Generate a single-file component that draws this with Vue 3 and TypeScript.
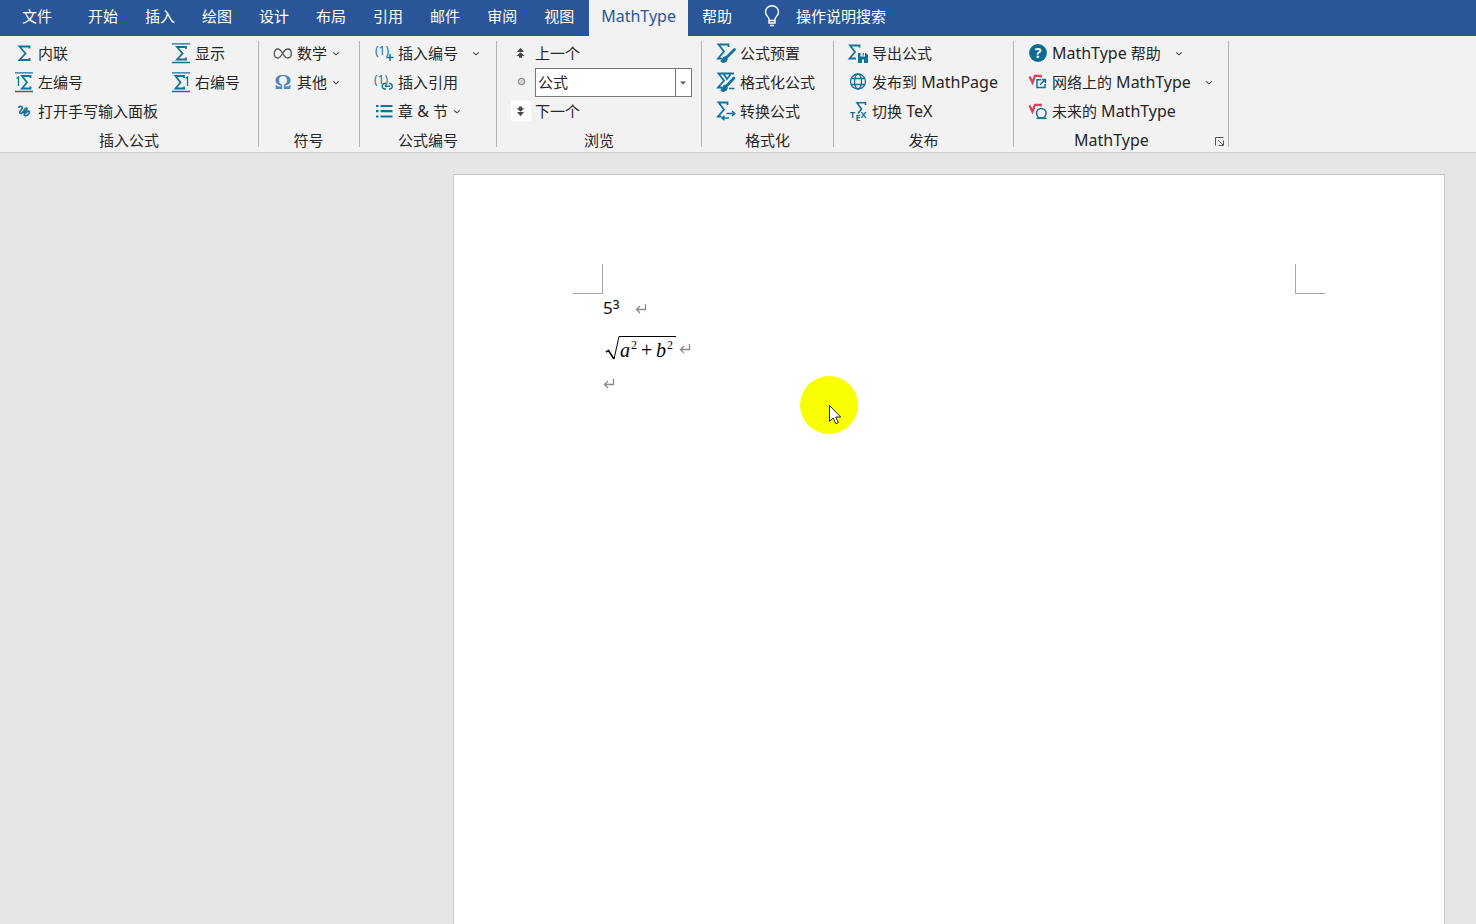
<script setup lang="ts">
import { ref } from 'vue'

interface Command {
  label: string
  icon: string
  menu?: 'near' | 'far'
}

interface Group {
  title: string
  kind: string
  commands: Command[]
  launcher?: boolean
}

const tabs = ['开始', '插入', '绘图', '设计', '布局', '引用', '邮件', '审阅', '视图', 'MathType', '帮助']
const activeTab = ref('MathType')
const browseTarget = ref('公式')

const groups: Group[] = [
  {
    title: '插入公式',
    kind: 'insert',
    commands: [
      { label: '内联', icon: 'inline' },
      { label: '显示', icon: 'display' },
      { label: '左编号', icon: 'left-number' },
      { label: '右编号', icon: 'right-number' },
      { label: '打开手写输入面板', icon: 'handwriting' },
    ],
  },
  {
    title: '符号',
    kind: 'symbols',
    commands: [
      { label: '数学', icon: 'infinity', menu: 'near' },
      { label: '其他', icon: 'omega', menu: 'near' },
    ],
  },
  {
    title: '公式编号',
    kind: 'numbering',
    commands: [
      { label: '插入编号', icon: 'number-add', menu: 'far' },
      { label: '插入引用', icon: 'number-link' },
      { label: '章 & 节', icon: 'list', menu: 'near' },
    ],
  },
  { title: '浏览', kind: 'browse', commands: [] },
  {
    title: '格式化',
    kind: 'format',
    commands: [
      { label: '公式预置', icon: 'preset' },
      { label: '格式化公式', icon: 'format' },
      { label: '转换公式', icon: 'convert' },
    ],
  },
  {
    title: '发布',
    kind: 'publish',
    commands: [
      { label: '导出公式', icon: 'export' },
      { label: '发布到 MathPage', icon: 'globe' },
      { label: '切换 TeX', icon: 'tex' },
    ],
  },
  {
    title: 'MathType',
    kind: 'about',
    launcher: true,
    commands: [
      { label: 'MathType 帮助', icon: 'help', menu: 'far' },
      { label: '网络上的 MathType', icon: 'web', menu: 'far' },
      { label: '未来的 MathType', icon: 'future' },
    ],
  },
]

// Splits a label into Latin and Chinese runs, which are set at different sizes.
function runs(text: string) {
  return (text.match(/[ -~]+|[^ -~]+/g) ?? []).map((part) => ({
    part,
    latin: /^[ -~]+$/.test(part),
  }))
}
</script>

<template>
  <div class="app">
    <nav class="tabs">
      <button type="button" class="tab file">文件</button>
      <button
        v-for="tab in tabs"
        :key="tab"
        type="button"
        class="tab"
        :class="{ active: tab === activeTab, latin: tab === 'MathType' }"
        @click="activeTab = tab"
      >{{ tab }}</button>
      <button type="button" class="tell-me">
        <svg class="bulb" viewBox="0 0 16 22" fill="none" stroke="#fff" stroke-width="1.4" aria-hidden="true">
          <path d="M5 15.500V14C5 12.300 1.500 10.800 1.500 7A6.500 6.200 0 0 1 14.500 7C14.500 10.800 11 12.300 11 14V15.500ZM5 15.500V18H11V15.500M6 20.500H10" />
        </svg>
        <span>操作说明搜索</span>
      </button>
    </nav>

    <div class="ribbon">
      <template v-for="group in groups" :key="group.title">
        <section class="group" :class="group.kind" :aria-label="group.title">
          <div v-if="group.kind !== 'browse'" class="commands">
            <button v-for="cmd in group.commands" :key="cmd.label" type="button" class="command">
              <svg class="icon" viewBox="0 0 21 21" fill="none" stroke="#12729c" stroke-width="1.8" aria-hidden="true">
                <path v-if="cmd.icon === 'inline'" d="M15.500 5.500V3.500H5.500L11.500 10.500L5.500 17H15.500V15" />
                <template v-else-if="cmd.icon === 'display'">
                  <path d="M1 .8H19M1 19.500H19" stroke-width="1.300" />
                  <path d="M15 6V4H6L11.500 10.500L6 16.500H15V14.500" />
                </template>
                <template v-else-if="cmd.icon === 'left-number'">
                  <path d="M1 .8H19M1 19.500H19" stroke-width="1.300" />
                  <path d="M16.500 6V4H8L13 10.500L8 16.500H16.500V14.500" />
                  <path d="M2.500 6.500L4.500 5V14" stroke-width="1.300" />
                </template>
                <template v-else-if="cmd.icon === 'right-number'">
                  <path d="M1 .8H19M1 19.500H19" stroke-width="1.300" />
                  <path d="M13 6V4H4.500L9.500 10.500L4.500 16.500H13V14.500" />
                  <path d="M14.500 6.500L16.500 5V14" stroke-width="1.300" />
                </template>
                <path v-else-if="cmd.icon === 'handwriting'" d="M4.500 7C5.500 4.800 8.800 4.800 8.300 7.300C7.800 9.300 5 10 5.800 11.800C7 13.800 9.500 10.500 11 8M11 8C12.500 5.800 14 7.500 12.500 9.300C11.500 10.500 9 11.300 10.300 12.300C12 12.800 13.500 9.500 15 10C16.500 11 14 14.800 11.300 14.800C9.800 14.800 9.800 13.500 11.300 13.300" stroke-width="1.600" />
                <path v-else-if="cmd.icon === 'infinity'" d="M9.800 10.500C8 7.500 6.800 6 4.800 6S1.300 7.800 1.300 10.500S2.800 15 4.800 15C9 15 10 6 14.800 6C17 6 18.300 7.800 18.300 10.500S17 15 14.800 15C12.600 15 11.300 13.200 9.800 10.500Z" stroke="#555" stroke-width="1.300" />
                <text v-else-if="cmd.icon === 'omega'" x="10" y="17" class="glyph omega">Ω</text>
                <template v-else-if="cmd.icon === 'number-add'">
                  <text x="8" y="12" class="glyph number">(1)</text>
                  <path d="M16 11V18M12.500 14.500H19.500" stroke-width="1.500" />
                </template>
                <template v-else-if="cmd.icon === 'number-link'">
                  <text x="7" y="12" class="glyph number">(1)</text>
                  <path d="M12 11.500H10.500A2.800 2.800 0 0 0 10.500 17H12M15 11.500H16A2.800 2.800 0 0 1 16 17H15M10.800 14.300H16" stroke-width="1.400" />
                </template>
                <path v-else-if="cmd.icon === 'list'" d="M2 5H4.500M6.500 5H18.500M2 10.200H4.500M6.500 10.200H18.500M2 15.500H4.500M6.500 15.500H18.500" stroke-width="2.200" />
                <template v-else-if="cmd.icon === 'preset'">
                  <path d="M12.500 4V1.500H2.500L8 8.500L2 15.500H6" />
                  <path d="M18.500 6.500L11.500 13.500" stroke-width="2.800" stroke-linecap="round" />
                  <path d="M10 14C11.500 15 11 17.500 9 18.500C7.500 19.200 6 18.800 5.500 18C7 17.500 6.500 14 10 14Z" fill="#12729c" />
                </template>
                <template v-else-if="cmd.icon === 'format'">
                  <path d="M18 1.500H2.500L8 8.500L2 15.500H6M7.500 2L11 7L14.500 2.500" />
                  <path d="M18 6L11.500 13" stroke-width="2.600" stroke-linecap="round" />
                  <path d="M13 16.500H18.500" stroke-width="1.500" />
                  <path d="M10 13.500C11.500 14.500 11 17.500 9 18.500C7.500 19.200 6 18.800 5.500 18C7 17.500 6.500 13.500 10 13.500Z" fill="#12729c" />
                </template>
                <template v-else-if="cmd.icon === 'convert'">
                  <path d="M11.500 4V1.500H2.500L8 8.500L2 15.500H5.500" />
                  <path d="M10.500 12.500H18.500M16 10L18.700 12.500L16 15M13 17H6M8.500 14.700L6 17L8.500 19.300" stroke-width="1.500" />
                </template>
                <template v-else-if="cmd.icon === 'export'">
                  <path d="M11.500 4.500V2.500H2L7 9L1.500 15.500H8" />
                  <path d="M10 10H18L20 12V20H10Z" fill="#12729c" stroke="none" />
                  <path d="M12.500 10H17V13.500H12.500ZM14 16.500H16V20H14Z" fill="#f2f2f2" stroke="none" />
                  <path d="M15.300 10V12.500" stroke-width="1.200" />
                </template>
                <g v-else-if="cmd.icon === 'globe'" stroke-width="1.300">
                  <circle cx="10" cy="9.500" r="7.500" />
                  <ellipse cx="10" cy="9.500" rx="3.500" ry="7.500" />
                  <path d="M3.300 6.500H16.700M3.300 12.500H16.700" />
                </g>
                <template v-else-if="cmd.icon === 'tex'">
                  <path d="M17.500 4V1.800H9L13.500 8L10 12.500" stroke-width="1.600" />
                  <text x="4.500" y="17" class="glyph tex">T</text>
                  <text x="10" y="20" class="glyph tex">E</text>
                  <text x="15.500" y="17" class="glyph tex">X</text>
                </template>
                <template v-else-if="cmd.icon === 'help'">
                  <circle cx="10" cy="10" r="8.900" fill="#0b6a96" stroke="none" />
                  <text x="10" y="15" class="glyph question">?</text>
                </template>
                <template v-else-if="cmd.icon === 'web'">
                  <path d="M1.500 4.500L4.500 10.500L7 3.800H12.700V5.500" stroke="#d9415c" stroke-width="2.300" />
                  <path d="M13 7.800H9V15.500H17V12M12 12.700L17 7.700M13.800 7.500H17.300V11" stroke-width="1.500" />
                </template>
                <template v-else-if="cmd.icon === 'future'">
                  <path d="M1.500 4.500L4.500 10.500L7 3.800H12.700V5.500" stroke="#d9415c" stroke-width="2.300" />
                  <circle cx="13.300" cy="12.300" r="4.800" fill="#f2f2f2" stroke-width="1.600" />
                  <path d="M8.500 17.300H18.500" stroke-width="1.600" />
                </template>
              </svg>
              <span class="label"><span v-for="(run, i) in runs(cmd.label)" :key="i" :class="{ latin: run.latin }">{{ run.part }}</span></span>
              <svg v-if="cmd.menu" class="chevron" :class="cmd.menu" viewBox="0 0 8 8" fill="none" stroke="#444" stroke-width="1.100" aria-hidden="true">
                <path d="M1.200 2.300L4 4.800L6.800 2.300" />
              </svg>
            </button>
          </div>

          <div v-else class="commands">
            <button type="button" class="command">
              <svg class="icon" viewBox="0 0 21 21" fill="#484848" aria-hidden="true">
                <path d="M9.500 4.800L13 9H6ZM9.500 9.300L13.500 13H11V14.800H8V13H5.500Z" />
              </svg>
              <span class="label">上一个</span>
            </button>
            <div class="picker">
              <svg class="icon" viewBox="0 0 21 21" aria-hidden="true">
                <circle cx="10.500" cy="9.500" r="3.300" fill="#d0d0d0" stroke="#808080" />
              </svg>
              <div class="combo">
                <select v-model="browseTarget" aria-label="浏览">
                  <option>公式</option>
                </select>
                <svg class="combo-arrow" viewBox="0 0 16 27" aria-hidden="true">
                  <path d="M.5 0V27" stroke="#767676" />
                  <path d="M5 12.500H11L8 15.500Z" fill="#555" />
                </svg>
              </div>
            </div>
            <button type="button" class="command">
              <svg class="icon" viewBox="0 0 21 21" fill="#484848" aria-hidden="true">
                <rect width="20" height="20" rx="1" fill="#fff" />
                <path d="M9.500 15.200L6 11H13ZM9.500 10.700L5.500 7.200H8V5.500H11V7.200H13.500Z" />
              </svg>
              <span class="label">下一个</span>
            </button>
          </div>

          <footer class="group-foot">
            <span class="title" :class="{ latin: group.launcher }">{{ group.title }}</span>
            <button v-if="group.launcher" type="button" class="launcher" aria-label="MathType">
              <svg viewBox="0 0 11 11" fill="none" stroke="#555" aria-hidden="true">
                <path d="M1.500 9.500V1.500H9.500M4 4L9 9M9.500 4.500V9.500H4.500" />
              </svg>
            </button>
          </footer>
        </section>
        <div class="separator"></div>
      </template>
    </div>

    <main class="workspace">
      <article class="page">
        <div class="corners">
          <span class="corner left"></span>
          <span class="corner right"></span>
        </div>
        <div class="body">
          <p class="line power">
            <span class="number-text">5<span class="exponent">3</span></span>
            <svg class="mark" viewBox="0 0 12 10"><path d="M10.500 0V5.500H1.500M5 2L1.500 5.500L5 9" /></svg>
          </p>
          <p class="line root">
            <svg class="formula" viewBox="0 0 74 32">
              <path d="M3 18L5.500 16.500L11 25" fill="none" stroke="#000" stroke-width="1.600" />
              <path d="M11 25L16 2.500H73" fill="none" stroke="#000" />
              <text x="17" y="23">a</text>
              <text x="28" y="15" class="small">2</text>
              <text x="38" y="23" class="upright">+</text>
              <text x="53" y="23">b</text>
              <text x="64" y="15" class="small">2</text>
            </svg>
            <svg class="mark" viewBox="0 0 12 10"><path d="M10.500 0V5.500H1.500M5 2L1.500 5.500L5 9" /></svg>
          </p>
          <p class="line">
            <svg class="mark" viewBox="0 0 12 10"><path d="M10.500 0V5.500H1.500M5 2L1.500 5.500L5 9" /></svg>
          </p>
        </div>
      </article>
    </main>

    <svg class="pointer" viewBox="0 0 58 58" aria-hidden="true">
      <circle cx="29" cy="29" r="29" fill="#faff00" />
      <path d="M29.500 29.500V45.500L33.200 42L35.800 47.700L38.300 46.600L35.800 41H40.700Z" fill="#fff" stroke="#222" />
    </svg>
  </div>
</template>

<style>
body {
  margin: 0;
}
</style>

<style scoped>
.app {
  position: relative;
  display: flex;
  flex-direction: column;
  min-height: 100vh;
  overflow: hidden;
  background: #e6e6e6;
  color: #262626;
  font: 15px/20px "Noto Sans", "Noto Sans CJK SC", sans-serif;
}

button {
  padding: 0;
  border: 0;
  background: none;
  color: inherit;
  font: inherit;
  white-space: pre;
}

.latin {
  font-size: 16px;
}

.tabs {
  display: flex;
  height: 36px;
  background: #2a5699;
  color: #fff;
}

.tab {
  padding: 0 13px 4px 14px;
}

.tab.file {
  padding: 0 22px 4px;
}

.tab.active {
  margin-left: 2px;
  padding: 0 12px 4px;
  background: #f2f2f2;
  color: #2a5699;
}

.tell-me {
  display: flex;
  align-items: center;
  gap: 16px;
  padding: 0 19px 4px;
}

.bulb {
  width: 16px;
  height: 22px;
}

.ribbon {
  display: flex;
  padding-top: 3px;
  border-bottom: 1px solid #cfcfcf;
  background: #f2f2f2;
}

.separator {
  width: 1px;
  margin: 2px 0 5px;
  background: #b4b4b4;
}

.group {
  display: flex;
  flex-direction: column;
  padding: 0 18px 0 14px;
}

.commands {
  display: grid;
  grid-auto-rows: 29px;
  justify-items: start;
  height: 87px;
}

.insert .commands {
  grid-template-columns: auto auto;
  column-gap: 13px;
}

.symbols {
  padding-right: 19px;
}

.numbering {
  padding-right: 16px;
}

.publish,
.about {
  padding-right: 15px;
}

.browse {
  padding-right: 9px;
}

.command,
.picker {
  display: flex;
  align-items: center;
  gap: 3px;
}

.icon {
  flex: none;
  width: 21px;
  height: 21px;
  overflow: visible;
}

.label {
  padding-bottom: 2px;
  white-space: pre;
}

.chevron {
  width: 8px;
  height: 8px;
  margin-left: 2px;
}

.chevron.far {
  margin-left: 11px;
}

.glyph {
  fill: #12729c;
  stroke: none;
  text-anchor: middle;
}

.omega {
  fill: #4f86b8;
  font: bold 21px/20px "Liberation Serif", serif;
}

.number {
  font: 12px "Noto Sans", sans-serif;
}

.tex {
  font: bold 9px "Noto Sans", sans-serif;
}

.question {
  fill: #fff;
  font: bold 14px "Noto Sans", sans-serif;
}

.combo {
  position: relative;
  width: 157px;
}

.combo select {
  display: block;
  width: 100%;
  height: 29px;
  padding: 0 20px 2px 2px;
  border: 1px solid #767676;
  border-radius: 0;
  appearance: none;
  background: #fff;
  color: inherit;
  font: inherit;
}

.combo-arrow {
  position: absolute;
  top: 1px;
  right: 1px;
  width: 16px;
  height: 27px;
  pointer-events: none;
}

.group-foot {
  display: flex;
  align-items: center;
  height: 22px;
  margin: 0 -18px 0 -14px;
  padding-top: 4px;
}

.numbering .group-foot {
  margin-right: -16px;
}

.publish .group-foot {
  margin-right: -15px;
}

.browse .group-foot {
  margin-right: -9px;
}

.about .group-foot {
  gap: 5px;
  margin-right: -12px;
}

.title {
  flex: 1;
  padding-bottom: 2px;
  text-align: center;
}

.launcher {
  width: 11px;
  height: 11px;
}

.launcher svg {
  display: block;
}

.workspace {
  display: flex;
  flex: 1;
  padding: 21px 31px 0 453px;
}

.page {
  flex: 1;
  border: 1px solid #c6c6c6;
  border-bottom: 0;
  background: #fff;
}

.corners {
  display: flex;
  justify-content: space-between;
  margin: 89px 119px 0;
}

.corner {
  width: 29px;
  height: 29px;
  border: 0 solid #a6a6a6;
  border-bottom-width: 1px;
}

.corner.left {
  border-right-width: 1px;
}

.corner.right {
  border-left-width: 1px;
}

.body {
  padding: 0 149px;
  color: #111;
}

.line {
  display: flex;
  align-items: center;
  height: 30px;
  margin: 0;
}

.power {
  gap: 15px;
  font-size: 17px;
}

.number-text {
  padding-bottom: 2px;
}

.exponent {
  font-size: 12px;
  font-weight: 500;
  line-height: 0;
  vertical-align: 5px;
}

.root {
  gap: 2px;
  height: 41px;
  padding-top: 4px;
}

.mark {
  width: 12px;
  height: 10px;
  fill: none;
  stroke: #8c8c8c;
  stroke-width: 1.3;
}

.formula {
  width: 74px;
  height: 32px;
  margin-top: 2px;
  font: italic 20px "Liberation Serif", serif;
}

.formula .small {
  font-size: 12px;
  font-style: normal;
}

.formula .upright {
  font-style: normal;
}

.pointer {
  position: absolute;
  top: 376px;
  left: 800px;
  width: 58px;
  height: 58px;
  pointer-events: none;
}
</style>
